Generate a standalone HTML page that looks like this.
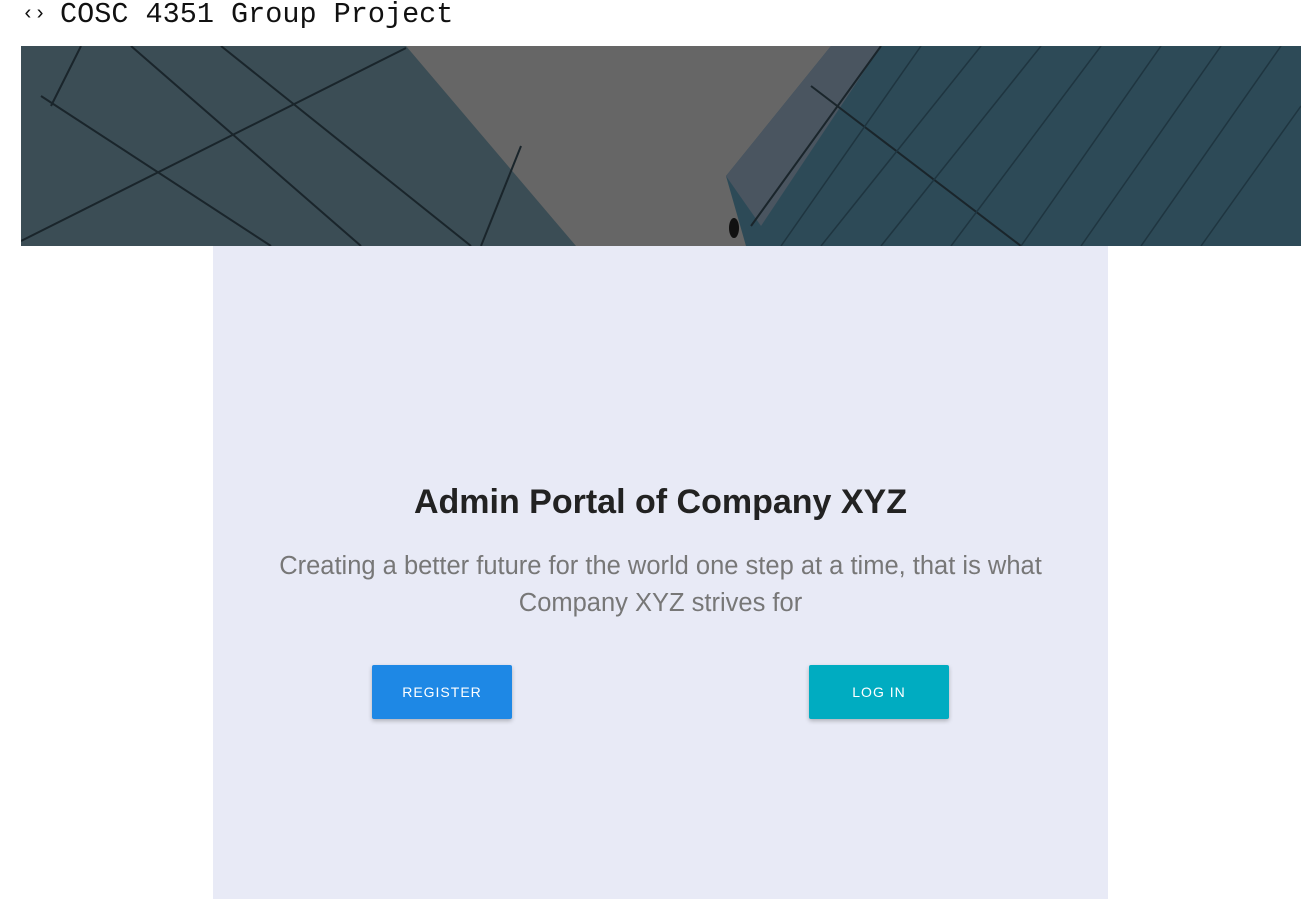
<!DOCTYPE html>
<html><head><style>
body{margin:0;width:1314px;height:899px;background:#fff;position:relative;overflow:hidden;font-family:"Liberation Sans",sans-serif}
.t{position:absolute;left:22px;top:0px;font-family:"Liberation Mono",monospace;font-size:28.5px;line-height:30px;color:#111;white-space:nowrap}
.t b{font-weight:normal;font-size:20px;position:relative;top:-3px;margin-right:14px}
.ban{position:absolute;left:21px;top:46px;width:1280px;height:200px}
.card{position:absolute;left:213px;top:246px;width:895px;height:653px;background:#e8eaf6}
h1{position:absolute;left:0;width:895px;top:237px;margin:0;text-align:center;font-size:34px;font-weight:bold;color:#222}
p{position:absolute;left:30px;width:835px;top:302px;margin:0;text-align:center;font-size:25.5px;line-height:37px;color:#777}
.b{position:absolute;top:419px;width:140px;height:54px;color:#fff;font-size:14px;letter-spacing:1px;display:flex;align-items:center;justify-content:center;border-radius:2px;box-shadow:0 2px 4px rgba(0,0,0,.25)}
</style></head><body>
<div class="t"><b>‹›</b>COSC 4351 Group Project</div>
<svg class="ban" viewBox="0 0 1280 200" preserveAspectRatio="none">
<rect width="1280" height="200" fill="#666"/>
<polygon points="0,0 385,0 555,200 0,200" fill="#3b4d55"/>
<polygon points="810,0 1280,0 1280,200 725,200 705,130" fill="#2d4a57"/>
<polygon points="810,0 860,0 740,180 705,130" fill="#4a5560"/>
<g stroke="#1a252b" stroke-width="2" fill="none">
<line x1="0" y1="195" x2="385" y2="2"/>
<line x1="20" y1="50" x2="250" y2="200"/>
<line x1="110" y1="0" x2="340" y2="200"/>
<line x1="200" y1="0" x2="450" y2="200"/>
<line x1="60" y1="0" x2="30" y2="60"/>
<line x1="500" y1="100" x2="460" y2="200"/>
<line x1="860" y1="0" x2="730" y2="180"/>
<line x1="790" y1="40" x2="1000" y2="200"/>
</g>
<g stroke="#1f3540" stroke-width="1.5">
<line x1="900" y1="0" x2="760" y2="200"/><line x1="960" y1="0" x2="800" y2="200"/>
<line x1="1020" y1="0" x2="860" y2="200"/><line x1="1080" y1="0" x2="930" y2="200"/>
<line x1="1140" y1="0" x2="1000" y2="200"/><line x1="1200" y1="0" x2="1060" y2="200"/>
<line x1="1260" y1="0" x2="1120" y2="200"/><line x1="1280" y1="60" x2="1180" y2="200"/>
</g>
<ellipse cx="713" cy="182" rx="5" ry="10" fill="#111"/>
</svg>
<div class="card">
<h1>Admin Portal of Company XYZ</h1>
<p>Creating a better future for the world one step at a time, that is what Company XYZ strives for</p>
<div class="b" style="left:159px;background:#1e88e5">REGISTER</div>
<div class="b" style="left:596px;background:#00acc1">LOG IN</div>
</div>
</body></html>
